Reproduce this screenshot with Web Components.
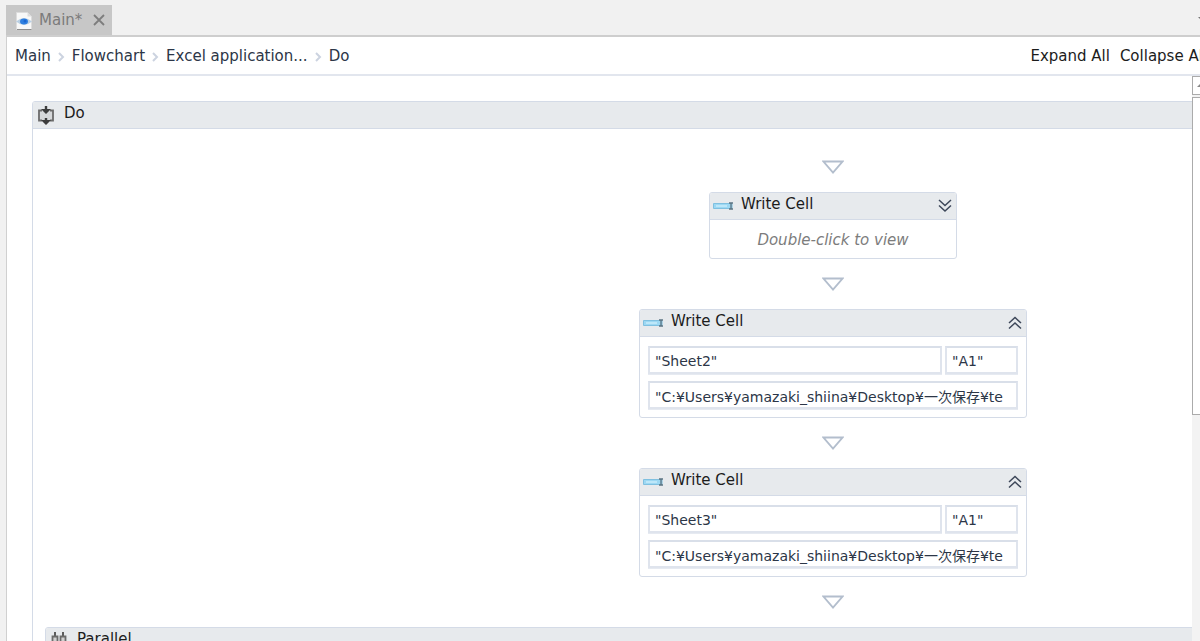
<!DOCTYPE html>
<html lang="en">
<head>
<meta charset="utf-8">
<title>Main</title>
<style>
  html,
  body {
    height: 100%;
    margin: 0;
    overflow: hidden;
  }
  body {
    background: #f1f1f1;
    color: #1c1c1c;
    font: 15px/20px "DejaVu Sans", "Noto Sans CJK JP", sans-serif;
    --line: #d4dbe7;
    --header: #e7eaed;
    --ink: #2c3647;
  }
</style>
</head>
<body>

<template id="designer-app-template">
  <style>
    /* the designer pane runs on a little past the window's right edge */
    :host {
      display: flex;
      flex-direction: column;
      box-sizing: border-box;
      width: calc(100% + 10px);
      height: 100%;
      padding-left: 6px;
    }
    main {
      display: flex;
      flex: 1;
      flex-direction: column;
      min-height: 0;
      border-left: 1px solid #d0d0d0;
      background: #fff;
    }
    .work {
      display: flex;
      flex: 1;
      min-height: 0;
    }
    .canvas {
      flex: 1;
      min-width: 0;
      padding: 25px 0 0 25px;
      overflow: hidden;
    }
  </style>
  <slot name="tabs"></slot>
  <main>
    <slot name="path"></slot>
    <div class="work">
      <div class="canvas"><slot></slot></div>
      <designer-scrollbar></designer-scrollbar>
    </div>
  </main>
</template>

<template id="document-tabs-template">
  <style>
    :host {
      display: flex;
      align-items: flex-end;
      justify-content: space-between;
      padding-top: 5px;
      border-bottom: 2px solid #cecece;
      box-shadow: 0 1px #e6e6e6;
    }
    .tab {
      display: flex;
      align-items: center;
      height: 30px;
      padding: 0 7px 0 9px;
      background: #c7c7c7;
      color: #7b7b7b;
    }
    .name {
      margin: 0 11px 0 6px;
    }
    button {
      display: flex;
      padding: 0;
      border: 0;
      background: none;
    }
    .more {
      padding: 12px 2px;
    }
  </style>
  <div class="tab">
    <svg width="18" height="20" viewBox="0 0 18 20">
      <path d="M1.500 2.500h11l4 4v13h-15z" fill="#f8f8f8" stroke="#dcdcdc"/>
      <path d="M12.500 2.500v4h4z" fill="#ddd"/>
      <path d="M2 19.500h14.500" stroke="#8d8d8d"/>
      <path d="M1 11.500q8-7 16 0q-8 7-16 0z" fill="#b9cfe3"/>
      <ellipse cx="9" cy="11.500" rx="4" ry="3" fill="#2f7fe0"/>
      <circle cx="10" cy="11" r="1.500" fill="#1a66d0"/>
    </svg>
    <span class="name"><slot></slot></span>
    <button aria-label="Close tab">
      <svg width="12" height="12" viewBox="0 0 12 12"><path d="M1 1l10 10M11 1L1 11" stroke="#7d7d7d" stroke-width="1.800"/></svg>
    </button>
  </div>
  <button class="more" aria-label="Open documents">
    <svg width="10" height="6" viewBox="0 0 10 6"><path d="M0 0h10L5 5z" fill="#777"/></svg>
  </button>
</template>

<template id="path-bar-template">
  <style>
    :host {
      display: flex;
      align-items: center;
      justify-content: space-between;
      height: 37px;
      padding-left: 8px;
      border-bottom: 2px solid #e2e6ee;
    }
    nav,
    .actions {
      display: flex;
      align-items: center;
    }
    nav {
      gap: 7px;
    }
    a {
      color: var(--ink);
      text-decoration: none;
    }
    button {
      padding: 0;
      border: 0;
      background: none;
      color: inherit;
      font: inherit;
    }
    .actions {
      gap: 10px;
      padding-right: 3px;
      white-space: nowrap;
    }
  </style>
  <nav></nav>
  <div class="actions">
    <button>Expand All</button>
    <button>Collapse All</button>
  </div>
</template>

<template id="activity-card-template">
  <style>
    :host {
      display: block;
      box-sizing: border-box;
      border: 1px solid var(--line);
      border-radius: 3px;
      background: #fff;
    }
    header {
      display: flex;
      align-items: center;
      height: 26px;
      padding: 0 4px 0 3px;
      border-bottom: 1px solid var(--line);
      border-radius: 2px 2px 0 0;
      background: var(--header);
    }
    .icon {
      display: flex;
      flex: none;
    }
    .title {
      flex: 1;
      padding: 0 8px 4px;
    }
    button {
      display: flex;
      padding: 0;
      border: 0;
      background: none;
    }
    .hint {
      padding: 10px 0 8px;
      color: #7c7c7c;
      font-style: italic;
      text-align: center;
    }
  </style>
  <header>
    <span class="icon"></span>
    <span class="title"></span>
  </header>
  <slot></slot>
</template>

<template id="write-cell-form-template">
  <style>
    :host {
      display: grid;
      grid-template-columns: 1fr 73px;
      gap: 7px 3px;
      padding: 9px 8px 8px;
    }
    input {
      box-sizing: border-box;
      width: 100%;
      height: 28px;
      padding: 1px 4px 0 5px;
      border: 2px solid #dfe4ed;
      border-top-color: #d9dfe9;
      background: #fff;
      box-shadow: 0 1px #e6eaf1;
      color: var(--ink);
      font: inherit;
      font-size: 14px;
    }
    .value {
      grid-column: 1 / -1;
    }
  </style>
  <input class="sheet" aria-label="Sheet name">
  <input class="cell" aria-label="Cell">
  <input class="value" aria-label="Value">
</template>

<template id="flow-arrow-template">
  <style>
    :host {
      display: flex;
      align-items: center;
      justify-content: center;
      height: 50px;
    }
  </style>
  <svg width="22" height="14" viewBox="0 0 22 14">
    <path d="M1.500 1.500h19L11 12.500z" fill="#fff" stroke="#b3becd" stroke-width="1.800"/>
  </svg>
</template>

<template id="designer-scrollbar-template">
  <style>
    :host {
      display: flex;
      flex: none;
      flex-direction: column;
      gap: 2px;
      width: 18px;
      background: #f3f3f3;
    }
    button {
      display: flex;
      align-items: center;
      justify-content: center;
      box-sizing: border-box;
      height: 19px;
      padding: 0;
      border: 1px solid #ababab;
      background: #fff;
    }
    .thumb {
      height: 56%;
      border: 1px solid #ababab;
      background: #fff;
    }
  </style>
  <button aria-label="Scroll up">
    <svg width="8" height="5" viewBox="0 0 8 5"><path d="M0 4l4-4 4 4z" fill="#888"/></svg>
  </button>
  <div class="thumb"></div>
</template>

<template id="flow-sequence-template">
  <style>
    :host {
      display: flex;
      flex-direction: column;
      align-items: center;
      padding: 13px 12px 12px;
    }
  </style>
  <slot></slot>
</template>

<style>
  /* the outer activity grows with the widest activity that it holds */
  .scope {
    width: max-content;
  }
  .folded {
    width: 248px;
  }
  .open {
    width: 388px;
  }
  .wide {
    width: 1576px;
  }
  .branches {
    height: 400px;
  }
</style>

<designer-app>
  <document-tabs slot="tabs">Main*</document-tabs>
  <path-bar slot="path" path="Main/Flowchart/Excel application.../Do"></path-bar>
  <activity-card class="scope" icon="scope" heading="Do">
    <flow-sequence>
      <flow-arrow></flow-arrow>
      <activity-card class="folded" icon="cell" heading="Write Cell" state="folded"></activity-card>
      <flow-arrow></flow-arrow>
      <activity-card class="open" icon="cell" heading="Write Cell" state="open">
        <write-cell-form sheet='"Sheet2"' cell='"A1"' value='"C:¥Users¥yamazaki_shiina¥Desktop¥一次保存¥te'></write-cell-form>
      </activity-card>
      <flow-arrow></flow-arrow>
      <activity-card class="open" icon="cell" heading="Write Cell" state="open">
        <write-cell-form sheet='"Sheet3"' cell='"A1"' value='"C:¥Users¥yamazaki_shiina¥Desktop¥一次保存¥te'></write-cell-form>
      </activity-card>
      <flow-arrow></flow-arrow>
      <activity-card class="wide" icon="parallel" heading="Parallel">
        <div class="branches"></div>
      </activity-card>
    </flow-sequence>
  </activity-card>
</designer-app>

<script>
  (function() {

    const ICONS = {
      scope: `<svg width="20" height="20" viewBox="0 0 20 20">
        <path d="M4 6h12v9H4z" fill="#d6d8da"/>
        <path d="M6 5.500H3v10h3M14 5.500h3v10h-3" fill="none" stroke="#6b6b6b" stroke-width="1.800"/>
        <path d="M10 1v4M10 13v4" stroke="#3d3d3d" stroke-width="2.400"/>
        <path d="M5 4h10l-5 5zM5 15h10l-5 5z" fill="#3d3d3d"/>
      </svg>`,
      cell: `<svg width="20" height="8" viewBox="0 0 20 8">
        <path d="M.5 1.500h18.500v5H.5z" fill="#9cd8f3" stroke="#7fc0e0"/>
        <path d="M3 4h11" stroke="#c9ecfb" stroke-width="1.500"/>
        <path d="M16 1h4M16 7h4M18 1v6" stroke="#5c7482" stroke-width="1.300"/>
      </svg>`,
      parallel: `<svg width="20" height="20" viewBox="0 0 20 20">
        <path d="M6 1v18M14 1v18" stroke="#5c5c5c" stroke-width="2"/>
        <path d="M3.500 5.500h5v9h-5zM11.500 5.500h5v9h-5z" fill="#d0d0d0" stroke="#6b6b6b" stroke-width="1.800"/>
      </svg>`
    };

    const CHEVRONS = {
      folded: "M1 1l6 5.500L13 1M1 6.500L7 12l6-5.500",
      open: "M1 7l6-5.500L13 7M1 12.500L7 7l6 5.500"
    };

    // base class: clones the template named after the tag
    class DesignerElement extends HTMLElement {
      constructor() {
        super();
        this.attachShadow({mode: "open"});
        const template = document.getElementById(this.localName + "-template");
        this.shadowRoot.appendChild(template.content.cloneNode(true));
      }

      $(selector) {
        return this.shadowRoot.querySelector(selector);
      }
    }

    class PathBar extends DesignerElement {
      connectedCallback() {
        const separator = `<svg width="7" height="12" viewBox="0 0 7 12">
          <path d="M1 3l4 4-4 4" fill="none" stroke="#ccd3e0" stroke-width="2"/></svg>`;
        this.$("nav").innerHTML = this.getAttribute("path")
          .split("/")
          .map(step => `<a href="#">${step}</a>`)
          .join(separator);
      }
    }

    class ActivityCard extends DesignerElement {
      connectedCallback() {
        const state = this.getAttribute("state");
        this.$(".icon").innerHTML = ICONS[this.getAttribute("icon")];
        this.$(".title").textContent = this.getAttribute("heading");

        if (state) {
          const button = document.createElement("button");
          button.setAttribute("aria-label", state === "open" ? "Collapse" : "Expand");
          button.innerHTML = `<svg width="14" height="14" viewBox="0 0 14 14">
            <path d="${CHEVRONS[state]}" fill="none" stroke="#3d4759" stroke-width="1.500"/></svg>`;
          this.$("header").appendChild(button);
        }
        if (state === "folded") {
          const hint = document.createElement("div");
          hint.className = "hint";
          hint.textContent = "Double-click to view";
          this.shadowRoot.appendChild(hint);
        }
      }
    }

    class WriteCellForm extends DesignerElement {
      connectedCallback() {
        for (const name of ["sheet", "cell", "value"])
          this.$("." + name).value = this.getAttribute(name);
      }
    }

    customElements.define("designer-scrollbar", class extends DesignerElement {});
    customElements.define("designer-app", class extends DesignerElement {});
    customElements.define("document-tabs", class extends DesignerElement {});
    customElements.define("flow-sequence", class extends DesignerElement {});
    customElements.define("flow-arrow", class extends DesignerElement {});
    customElements.define("path-bar", PathBar);
    customElements.define("activity-card", ActivityCard);
    customElements.define("write-cell-form", WriteCellForm);

  })();
</script>
</body>
</html>
